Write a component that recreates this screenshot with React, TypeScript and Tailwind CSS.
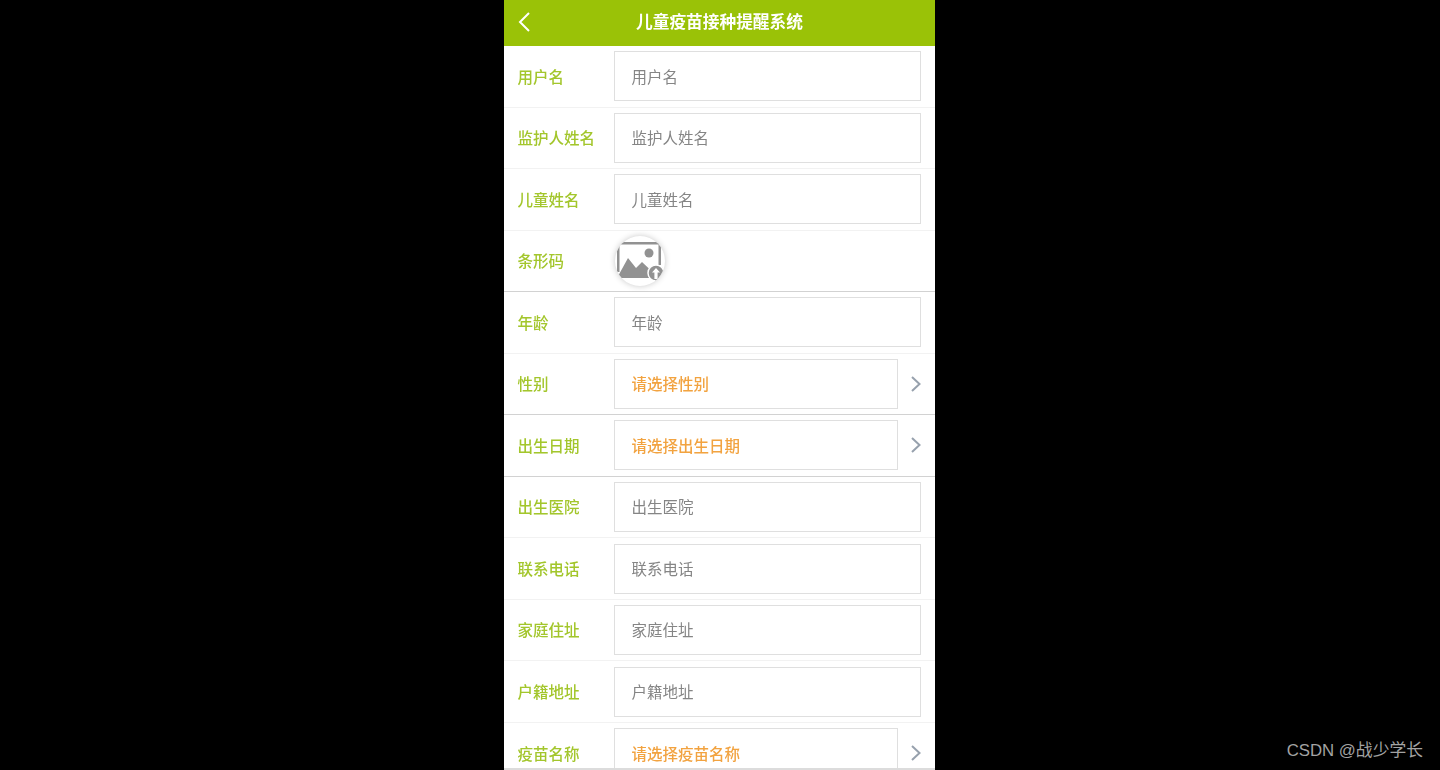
import React from 'react';

type Row = { label: string; value: string; kind?: 'text' | 'select' | 'upload' };

const rows: Row[] = [
  { label: '用户名', value: '用户名' },
  { label: '监护人姓名', value: '监护人姓名' },
  { label: '儿童姓名', value: '儿童姓名' },
  { label: '条形码', value: '', kind: 'upload' },
  { label: '年龄', value: '年龄' },
  { label: '性别', value: '请选择性别', kind: 'select' },
  { label: '出生日期', value: '请选择出生日期', kind: 'select' },
  { label: '出生医院', value: '出生医院' },
  { label: '联系电话', value: '联系电话' },
  { label: '家庭住址', value: '家庭住址' },
  { label: '户籍地址', value: '户籍地址' },
  { label: '疫苗名称', value: '请选择疫苗名称', kind: 'select' },
];

const font = "font-['Liberation_Sans','Noto_Sans_CJK_SC',sans-serif]";

const UploadIcon = () => (
  <div className="w-[50px] h-[50px] ml-[1px] rounded-full bg-white shadow-[0_0_6px_rgba(0,0,0,0.22)] overflow-hidden shrink-0">
    <svg viewBox="0 0 50 50" className="w-[50px] h-[50px]">
      <path d="M2 6h44v2.500H4.500V36H2z" fill="#929292" />
      <path d="M43.500 7H46v22h-2.500z" fill="#929292" />
      <circle cx="34" cy="17" r="4.500" fill="#929292" />
      <path d="M2 42 L13 22 L21 32 L27 26 L44 42 Z" fill="#929292" />
      <circle cx="41" cy="37" r="8" fill="#929292" stroke="#fff" strokeWidth="1.500" />
      <path d="M41 32l4 4.500h-2.400V43h-3.200v-6.500H37z" fill="#fff" />
    </svg>
  </div>
);

const FormRow = ({ label, value, kind = 'text', strong }: Row & { strong: boolean }) => (
  <div className={`h-[61.56px] pb-[0.2px] shrink-0 flex items-center pl-[13.500px] pr-[14px] border-b ${strong ? 'border-[#d2d2d2]' : 'border-[#f2f2f2]'}`}>
    <span className="w-[96.500px] pt-[2px] shrink-0 text-[15.500px] font-medium text-[#a3c62c]">{label}</span>
    {kind === 'upload' && <UploadIcon />}
    {kind === 'text' && (
      <div className="flex-1 h-[50px] border-[1.500px] border-[#dfdfdf] flex items-center pt-[2px] pl-[16.500px] text-[15.500px] text-[#858585]">{value}</div>
    )}
    {kind === 'select' && (
      <>
        <div className="flex-1 h-[50px] border-[1.500px] border-[#dfdfdf] flex items-center pt-[2px] pl-[16.500px] text-[15.500px] font-medium text-[#f2a340]">{value}</div>
        <svg viewBox="0 0 12 18" className="w-[12px] h-[18px] ml-[12px] mr-[-1px] shrink-0" fill="none" stroke="#97a1ad" strokeWidth="2">
          <path d="M2 2l7.500 7-7.500 7" />
        </svg>
      </>
    )}
  </div>
);

export default function App() {
  return (
    <div className={`relative h-[770px] w-[1440px] bg-black overflow-hidden flex justify-center ${font}`}>
      <div className="w-[431px] ml-[-1px] h-[770px] bg-white flex flex-col overflow-hidden blur-[0.4px] border-b-2 border-[#dcdcdc]">
        <header className="h-[46px] shrink-0 bg-[#9ac207] flex items-center relative justify-center">
          <svg viewBox="0 0 14 22" className="absolute left-[13px] top-[11px] w-[14px] h-[22px]" fill="none" stroke="#fff" strokeWidth="2">
            <path d="M12 2l-9 9 9 9" />
          </svg>
          <h1 className="text-[16.700px] font-bold text-white">儿童疫苗接种提醒系统</h1>
        </header>
        {rows.map((r) => (
          <FormRow key={r.label} {...r} strong={r.label === '条形码' || r.kind === 'select'} />
        ))}
      </div>
      <div className="absolute right-[17px] bottom-[8px] text-[16.800px] leading-[22px] text-[#a3a3a3]">CSDN @战少学长</div>
    </div>
  );
}
